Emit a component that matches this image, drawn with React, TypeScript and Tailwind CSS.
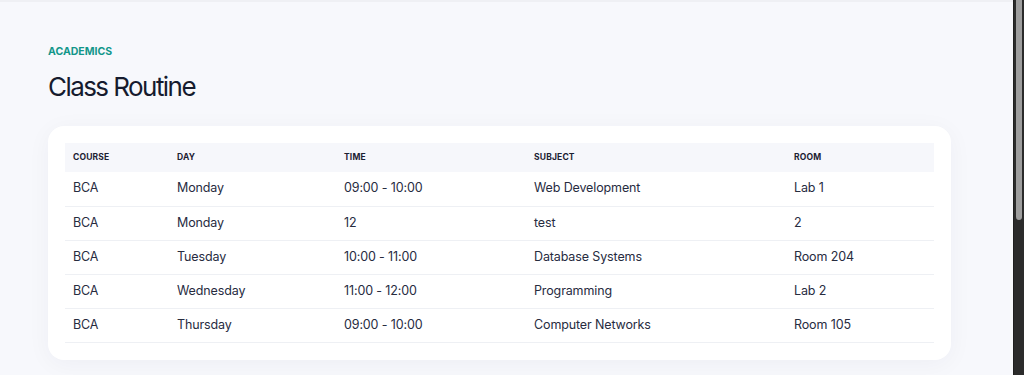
import React from "react";

const rows = [
  ["BCA", "Monday", "09:00 - 10:00", "Web Development", "Lab 1"],
  ["BCA", "Monday", "12", "test", "2"],
  ["BCA", "Tuesday", "10:00 - 11:00", "Database Systems", "Room 204"],
  ["BCA", "Wednesday", "11:00 - 12:00", "Programming", "Lab 2"],
  ["BCA", "Thursday", "09:00 - 10:00", "Computer Networks", "Room 105"],
];

const headers = ["Course", "Day", "Time", "Subject", "Room"];

export default function App() {
  return (
    <div className="flex h-screen overflow-hidden bg-[#f7f8fc] font-['Inter',sans-serif]">
      <div className="min-w-0 flex-1">
        <div className="h-[2px] bg-[#eff0f4]" />
        <main className="px-12 pt-[42px] pb-[280px]">
          <p className="text-[10.5px] font-bold uppercase tracking-[0] text-[#12968a] leading-4">
            Academics
          </p>
          <h1 className="mt-[11px] text-[26px] leading-8 font-normal tracking-[-0.06em] text-[#161b2e]">
            Class Routine
          </h1>
          <div className="mt-[23px] w-[903px] rounded-2xl bg-white p-[17px] shadow-[0_4px_24px_rgba(20,30,70,0.045)]">
            <table className="w-full table-fixed border-collapse text-left">
              <colgroup>
                <col className="w-[104px]" />
                <col className="w-[167px]" />
                <col className="w-[190px]" />
                <col className="w-[260px]" />
                <col />
              </colgroup>
              <thead>
                <tr className="bg-[#f6f7fb]">
                  {headers.map((h) => (
                    <th
                      key={h}
                      className="h-[29px] px-2 text-[8.5px] font-bold uppercase tracking-[0.02em] text-[#1c2133]"
                    >
                      {h}
                    </th>
                  ))}
                </tr>
              </thead>
              <tbody>
                {rows.map((r, i) => (
                  <tr key={i} className="border-b border-[#eef0f4]">
                    {r.map((c, j) => (
                      <td
                        key={j}
                        className="h-[34px] px-2 text-[12.5px] text-[#272c3f] tracking-[-0.01em]"
                      >
                        {c}
                      </td>
                    ))}
                  </tr>
                ))}
              </tbody>
            </table>
          </div>
        </main>
      </div>
      <div className="w-[11px] shrink-0 border-l border-[#1f1f1f] bg-[#2b2b2b] pl-[2px] pr-[2px]">
        <div className="h-[220px] w-[6px] rounded-b-[3px] bg-[#9e9e9e]" />
      </div>
    </div>
  );
}
